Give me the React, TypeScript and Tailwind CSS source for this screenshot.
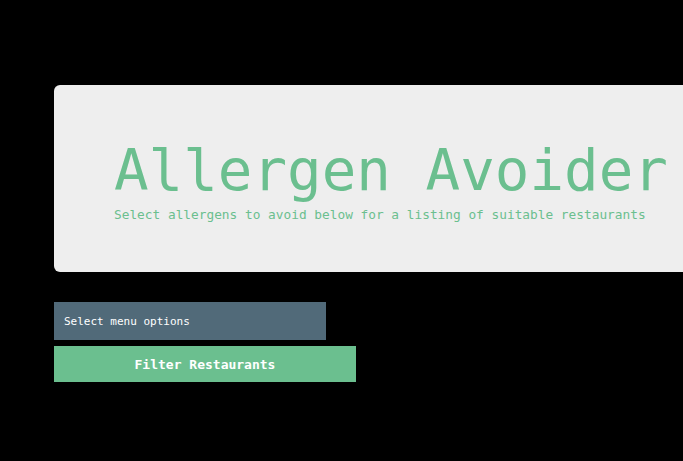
import React from 'react';

const mono = "font-['DejaVu_Sans_Mono',monospace]";

const App: React.FC = () => {
  return (
    <div className={`w-screen h-screen bg-black overflow-hidden ${mono}`}>
      <div className="flex flex-col items-start pl-[54px] pt-[85px]">
        {/* Header panel */}
        <div className="w-[700px] h-[187px] shrink-0 rounded-md bg-[#eeeeee] pl-[60px] pt-[57px]">
          <h1 className="text-[57.5px] leading-none text-[#6bbf8f] whitespace-nowrap">Allergen Avoider</h1>
          <p className="mt-[9px] text-[12.8px] leading-none text-[#6bbf8f] whitespace-nowrap">
            Select allergens to avoid below for a listing of suitable restaurants
          </p>
        </div>

        {/* Controls */}
        <div className="mt-[30px] w-[272px] h-[38px] bg-[#516a79] flex items-center px-[10px] pt-[2px] text-[11px] text-white">
          Select menu options
        </div>
        <button className="mt-[6px] w-[302px] h-[36px] bg-[#6bbf8f] text-white font-bold text-[13px] flex items-center justify-center pt-px">
          Filter Restaurants
        </button>
      </div>
    </div>
  );
};

export default App;
